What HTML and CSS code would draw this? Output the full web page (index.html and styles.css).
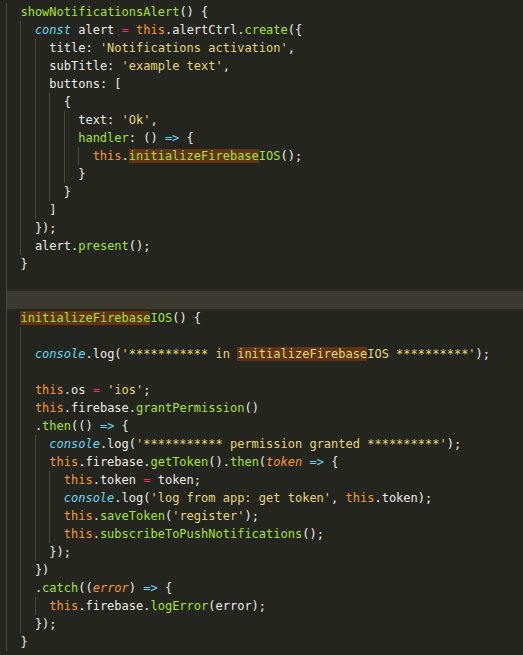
FILE: index.html
```html
<!DOCTYPE html>
<html>
<head>
<meta charset="utf-8">
<link rel="stylesheet" href="styles.css">
</head>
<body>
<div class="code">
<div class="ln"><span class="g"></span><span class="f">showNotificationsAlert</span>() {</div>
<div class="ln"><span class="g"></span><span class="g"></span><span class="st">const</span> alert <span class="op">=</span> <span class="th">this</span>.alertCtrl.<span class="f">create</span>({</div>
<div class="ln"><span class="g"></span><span class="g"></span><span class="g"></span>title: <span class="s">'Notifications activation'</span>,</div>
<div class="ln"><span class="g"></span><span class="g"></span><span class="g"></span>subTitle: <span class="s">'example text'</span>,</div>
<div class="ln"><span class="g"></span><span class="g"></span><span class="g"></span>buttons: [</div>
<div class="ln"><span class="g"></span><span class="g"></span><span class="g"></span><span class="g"></span>{</div>
<div class="ln"><span class="g"></span><span class="g"></span><span class="g"></span><span class="g"></span><span class="g"></span>text: <span class="s">'Ok'</span>,</div>
<div class="ln"><span class="g"></span><span class="g"></span><span class="g"></span><span class="g"></span><span class="g"></span><span class="f">handler</span>: () <span class="ar">=&gt;</span> {</div>
<div class="ln"><span class="g"></span><span class="g"></span><span class="g"></span><span class="g"></span><span class="g"></span><span class="g"></span><span class="th">this</span>.<span class="f"><span class="m">initializeFirebase</span>IOS</span>();</div>
<div class="ln"><span class="g"></span><span class="g"></span><span class="g"></span><span class="g"></span><span class="g"></span>}</div>
<div class="ln"><span class="g"></span><span class="g"></span><span class="g"></span><span class="g"></span>}</div>
<div class="ln"><span class="g"></span><span class="g"></span><span class="g"></span>]</div>
<div class="ln"><span class="g"></span><span class="g"></span>});</div>
<div class="ln"><span class="g"></span><span class="g"></span>alert.<span class="f">present</span>();</div>
<div class="ln"><span class="g"></span>}</div>
<div class="ln"><span class="g"></span></div>
<div class="ln cur"><span class="g"></span></div>
<div class="ln"><span class="g"></span><span class="f"><span class="m">initializeFirebase</span>IOS</span>() {</div>
<div class="ln"><span class="g"></span><span class="g"></span></div>
<div class="ln"><span class="g"></span><span class="g"></span><span class="st">console</span>.log(<span class="s">'*********** in <span class="m">initializeFirebase</span>IOS **********'</span>);</div>
<div class="ln"><span class="g"></span><span class="g"></span></div>
<div class="ln"><span class="g"></span><span class="g"></span><span class="th">this</span>.os <span class="op">=</span> <span class="s">'ios'</span>;</div>
<div class="ln"><span class="g"></span><span class="g"></span><span class="th">this</span>.firebase.<span class="f">grantPermission</span>()</div>
<div class="ln"><span class="g"></span><span class="g"></span>.<span class="f">then</span>(() <span class="ar">=&gt;</span> {</div>
<div class="ln"><span class="g"></span><span class="g"></span><span class="g"></span><span class="st">console</span>.log(<span class="s">'*********** permission granted **********'</span>);</div>
<div class="ln"><span class="g"></span><span class="g"></span><span class="g"></span><span class="th">this</span>.firebase.<span class="f">getToken</span>().<span class="f">then</span>(<span class="pa">token</span> <span class="ar">=&gt;</span> {</div>
<div class="ln"><span class="g"></span><span class="g"></span><span class="g"></span><span class="g"></span><span class="th">this</span>.token <span class="op">=</span> token;</div>
<div class="ln"><span class="g"></span><span class="g"></span><span class="g"></span><span class="g"></span><span class="st">console</span>.log(<span class="s">'log from app: get token'</span>, <span class="th">this</span>.token);</div>
<div class="ln"><span class="g"></span><span class="g"></span><span class="g"></span><span class="g"></span><span class="th">this</span>.<span class="f">saveToken</span>(<span class="s">'register'</span>);</div>
<div class="ln"><span class="g"></span><span class="g"></span><span class="g"></span><span class="g"></span><span class="th">this</span>.<span class="f">subscribeToPushNotifications</span>();</div>
<div class="ln"><span class="g"></span><span class="g"></span><span class="g"></span>});</div>
<div class="ln"><span class="g"></span><span class="g"></span>})</div>
<div class="ln"><span class="g"></span><span class="g"></span>.<span class="f">catch</span>((<span class="pa">error</span>) <span class="ar">=&gt;</span> {</div>
<div class="ln"><span class="g"></span><span class="g"></span><span class="g"></span><span class="th">this</span>.firebase.<span class="f">logError</span>(error);</div>
<div class="ln"><span class="g"></span><span class="g"></span>});</div>
<div class="ln"><span class="g"></span>}</div>
</div>
</body>
</html>
```
FILE: styles.css
```css
html, body {
  margin: 0;
  padding: 0;
  background: #252520;
  height: 100%;
}
body {
  overflow: hidden;
}
.code {
  padding-top: 3px;
  margin-left: 6px;
  font-family: "DejaVu Sans Mono", monospace;
  font-size: 12px;
  line-height: 18px;
  color: #ecece6;
}
.ln {
  white-space: pre;
  height: 18px;
}
.ln.cur {
  background: #3a3a31;
}
.g {
  display: inline-block;
  width: 2ch;
  height: 18px;
  vertical-align: top;
  border-left: 1px solid #4a4a43;
  box-sizing: border-box;
}
.f { color: #a6e22e; }
.s { color: #e3d774; }
.th { color: #f59a2b; }
.st { color: #66d9ef; font-style: italic; }
.op { color: #f92672; }
.ar { color: #66d9ef; }
.pa { color: #f59a2b; font-style: italic; }
.m { background: #613413; }
```
